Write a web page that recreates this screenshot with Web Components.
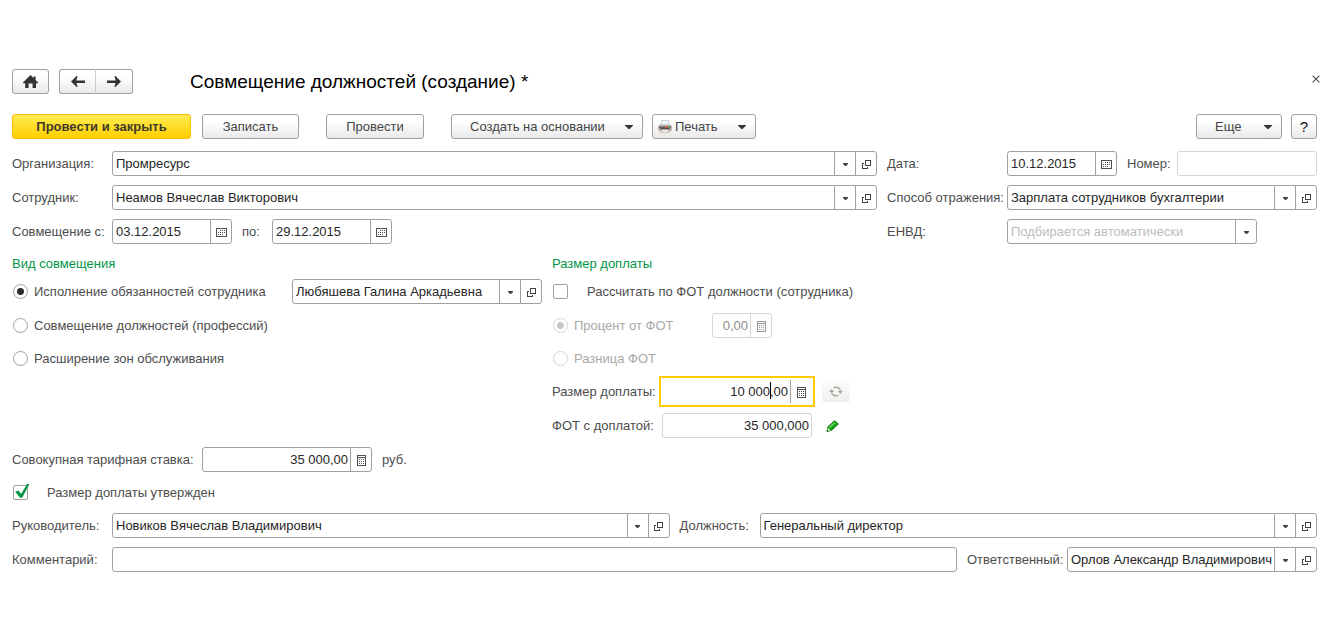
<!DOCTYPE html>
<html lang="ru">
<head>
<meta charset="utf-8">
<title>Совмещение должностей (создание)</title>
<style>
  body { margin: 0; background: #fff; font: 13px/15px "Liberation Sans", Arial, sans-serif; color: #4d4d4d; }
</style>
</head>
<body>
<doc-form></doc-form>

<script>
const svg = (w, h, body, crisp = true) =>
  `<svg width="${w}" height="${h}" viewBox="0 0 ${w} ${h}" ${crisp ? 'shape-rendering="crispEdges"' : ''} aria-hidden="true">${body}</svg>`;

const icons = {
  home: svg(15, 13, '<path fill="#333" d="M7.5 0 L10.5 3 V1.4 H12.6 V5 L15 7.6 V8.2 H13 V13 H9.6 V8.4 H5.6 V13 H2.2 V8.2 H0 V7.6 Z"/>', false),
  back: svg(14, 11, '<path fill="#333" d="M5.6 0 L0 5.5 L5.6 11 H6.6 L5.4 7 H14 V4.4 H5.4 L6.6 0 Z"/>', false),
  forward: svg(14, 11, '<path fill="#333" d="M8.4 0 L14 5.5 L8.4 11 H7.4 L8.6 7 H0 V4.4 H8.6 L7.4 0 Z"/>', false),
  close: svg(8, 8, '<path stroke="#555" stroke-width="1.2" fill="none" d="M.6 .6 L7.4 7.4 M7.4 .6 L.6 7.4"/>', false),
  caret: svg(8, 4, '<path fill="#333" d="M0 0 H8 V.6 L4.6 4 H3.4 L0 .6 Z"/>', false),
  drop: svg(5, 3, '<path fill="#444" d="M0 0 H5 V1 L3 3 H2 L0 1 Z"/>', false),
  open: svg(9, 9, '<path fill="none" stroke="#444" d="M3.5 .5 H8.5 V5.5 H3.5 Z M2 3.5 H.5 V8.5 H5.5 V7"/>'),
  calendar: svg(11, 9, '<path fill="none" stroke="currentColor" d="M.5 .5 H10.5 V8.5 H.5 Z"/><path stroke="currentColor" stroke-dasharray="1 1" d="M4 2.5 H9 M2 4.5 H9 M2 6.5 H7"/>'),
  calc: svg(9, 11, '<path fill="none" stroke="currentColor" d="M.5 .5 H8.5 V10.5 H.5 Z M1 2.5 H8"/><path stroke="currentColor" stroke-dasharray="1 1" d="M2 4.5 H7 M2 6.5 H7 M2 8.5 H7"/>'),
  printer: svg(14, 13, '<path fill="#f6f6f8" stroke="#c3c3cc" stroke-width=".8" d="M3.6 .5 H10.6 L11 5 H3 Z"/><path fill="#bdbaba" d="M1.5 4.5 H12.5 L14 6.5 V10 L12.5 11.5 H1.5 L0 10 V6.5 Z"/><path fill="#6c5f5a" d="M1 6.3 H13 V8.2 H1 Z"/><path fill="#3e3936" d="M2.5 8.2 H11.5 V9.8 H2.5 Z"/><path fill="#e8532f" d="M7 6.8 H9.5 V8 H7 Z"/><path fill="#5fae5a" d="M10.3 6.8 H12 V8 H10.3 Z"/><path fill="#f8efe8" stroke="#b5a79e" stroke-width=".7" d="M3.5 9.6 H10.5 L11.2 12.4 H2.8 Z"/>', false),
  refresh: svg(14, 11, '<g fill="none" stroke="#a3ae9b" stroke-width="1.4"><path d="M4.6 1.6 Q10.6 .2 11.4 5"/><path d="M9.4 9.4 Q3.4 10.8 2.6 6"/></g><path fill="#a3ae9b" d="M8.8 5 H14 L11.4 8 Z M0 6 H5.2 L2.6 3 Z"/>', false),
  pencil: svg(13, 12, '<path fill="#12a012" stroke="#0b6b12" stroke-width=".8" d="M8.6 .6 L12.4 4 L5.4 10.4 L1 11.4 L1.8 6.8 Z"/><path fill="#5ed35a" d="M8.2 2 L9.6 3.2 L4 8.2 L2.8 7 Z"/><path fill="#eafbe6" d="M1.7 7.8 L4.4 10.2 L1.5 11 Z"/><path fill="#0b5a12" d="M1 9.8 L2.6 11.2 L.6 11.8 Z"/>', false),
  tick: svg(16, 15, '<path fill="#009646" d="M1.2 7.8 L4.6 6.4 L7 10 L13.2 0 H15.4 L8.2 13.8 H6 Z"/>', false)
};

const base = `*, *::before, *::after { box-sizing: border-box; }
  svg { display: block; flex: none; }
  button, input, select { font: inherit; color: inherit; margin: 0; }`;

class Base extends HTMLElement {
  connectedCallback() {
    if (this.shadowRoot) return;
    this.attachShadow({ mode: 'open' }).innerHTML = this.render();
    this.ready();
  }
  attr(name, fallback = '') { return this.getAttribute(name) ?? fallback; }
  ready() {}
}

/* Push button; "menu" adds the drop-down arrow, "kind" picks the look. */
customElements.define('ui-button', class extends Base {
  render() {
    const icon = this.attr('icon');
    return `<style>${base}
      :host { display: inline-flex; flex: none; height: 25px; color: #444; }
      button { flex: 1; display: flex; align-items: center; justify-content: center; gap: 3px; padding: 0;
        border: 1px solid #a0a0a0; border-radius: 3px; background: linear-gradient(#fff 30%, #e9e9e9); }
      :host([kind=primary]) button { font-weight: bold; border-color: #fb0; color: #3f3a2a;
        background: linear-gradient(#ffec50, #ffcf00); }
      :host([kind=plain]) button { border: 0; background: none; }
      :host([kind=soft]) button { border: 0; border-radius: 2px; background: linear-gradient(#fbfbfb, #f0f0f0); }
      :host([join=start]) button { border-radius: 3px 0 0 3px; border-right-color: #ccc; }
      :host([join=end]) button { border-radius: 0 3px 3px 0; border-left-width: 0; }
      :host([menu]) button { justify-content: space-between; padding: 0 9px 0 18px; }
      :host([icon=printer]) button { padding-left: 5px; }
      .text { display: flex; align-items: center; gap: 3px; }
      :host([kind=help]) button { font-size: 15px; color: #111; }
    </style>
    <button type="button" aria-label="${this.attr('label')}"><span class="text">${icon ? icons[icon] : ''}<slot></slot></span>${this.hasAttribute('menu') ? icons.caret : ''}</button>`;
  }
  ready() {
    if (!this.hasAttribute('label')) this.shadowRoot.querySelector('button').removeAttribute('aria-label');
  }
});

/* Labelled field: text box or drop-down, with the side buttons named in "tools". */
customElements.define('ui-field', class extends Base {
  render() {
    const tools = this.attr('tools').split(' ').filter(Boolean);
    const names = { open: 'Открыть', calendar: 'Календарь', calc: 'Калькулятор' };
    const value = this.attr('value');
    const off = this.hasAttribute('disabled') ? 'disabled' : '';
    const control = tools.includes('drop')
      ? `<div class="pick"><select id="c"><option>${value}</option></select><span class="cell">${icons.drop}</span></div>`
      : `<input id="c" type="text" value="${value}" ${off}>`;
    return `<style>${base}
      :host { display: flex; align-items: center; min-width: 0; height: 25px; }
      label { flex: none; width: var(--label, auto); white-space: nowrap; }
      .box { position: relative; flex: 1; display: flex; min-width: 0; height: 25px; border: 1px solid #a0a0a0;
        border-radius: 3px; background: #fff; color: #262626; }
      :host([light]) .box, :host([disabled]) .box { border-color: #d6d6d6; }
      :host([disabled]) .box { color: #8c8c8c; }
      :host([hint]) select { color: #bdbdbd; }
      :host([active]) .box { border-color: transparent; outline: 2px solid #fc0; outline-offset: 1px; border-radius: 0; }
      input, select { flex: 1; width: 100%; min-width: 0; height: 23px; padding: 0 3px; border: 0; outline: 0;
        background: transparent; appearance: none; }
      :host([right]) input { text-align: right; padding-right: 2px; }
      .pick { flex: 1; min-width: 0; display: grid; grid-template-columns: minmax(0, 1fr) 21px; }
      select { grid-area: 1 / 1 / 2 / 3; padding: 0 21px 0 3px; text-overflow: clip; }
      .pick .cell { grid-area: 1 / 2; pointer-events: none; }
      .cell { flex: none; width: 21px; display: grid; place-items: center; padding: 2px 0 0; border: 0;
        border-left: 1px solid #a0a0a0; background: none; color: #505050; }
      :host([disabled]) .cell { border-color: #d6d6d6; color: #999; }
      .caret { position: absolute; right: 40px; top: 2px; width: 1px; height: 17px; background: #000; }
    </style>
    ${this.hasAttribute('label') ? `<label for="c">${this.attr('label')}</label>` : ''}
    <div class="box">${control}${this.hasAttribute('active') ? '<span class="caret"></span>' : ''}${tools.filter(t => t !== 'drop').map(t =>
      `<button class="cell" type="button" aria-label="${names[t]}" ${off}>${icons[t]}</button>`).join('')}</div>`;
  }
  ready() {
    if (!this.hasAttribute('label')) this.shadowRoot.querySelector('#c').setAttribute('aria-label', this.attr('name'));
  }
});

/* Radio or tick box with its caption. */
customElements.define('ui-choice', class extends Base {
  render() {
    const on = n => this.hasAttribute(n) ? n : '';
    return `<style>${base}
      :host { display: flex; align-items: center; min-width: 0; }
      :host([disabled]) { color: #a8a8a8; --line: #d3d3d3; --dot: #c6c6c6; }
      label { display: flex; align-items: center; gap: 6px; padding-left: 1px; white-space: nowrap; }
      :host([type=checkbox]) label { gap: 19px; }
      .mark { position: relative; display: grid; }
      input { appearance: none; width: 15px; height: 15px; border: 1px solid var(--line, #a0a0a0); border-radius: 50%; background: #fff; }
      input[type=checkbox] { border-radius: 2px; }
      input[type=radio]:checked { background: radial-gradient(circle, var(--dot, #2b2b2b) 3px, #fff 4px); }
      svg { position: absolute; left: 1px; top: -1px; display: none; pointer-events: none; }
      input[type=checkbox]:checked + svg { display: block; }
    </style>
    <label><span class="mark"><input type="${this.attr('type')}" ${on('checked')} ${on('disabled')}>${icons.tick}</span><slot></slot></label>`;
  }
  ready() {
    this.input = this.shadowRoot.querySelector('input');
    this.input.addEventListener('change', () => this.dispatchEvent(new CustomEvent('pick', { bubbles: true })));
  }
});

/* Titled group; keeps one radio chosen among its own. */
customElements.define('ui-group', class extends Base {
  render() {
    return `<style>${base}
      :host { display: block; min-width: 0; }
      section { display: flex; flex-direction: column; gap: 9px; }
      h2 { margin: 0; height: 17px; padding-top: 3px; font: inherit; color: #009646; }
    </style><section><h2>${this.attr('title-text')}</h2><slot></slot></section>`;
  }
  ready() {
    this.addEventListener('pick', e => {
      if (e.target.getAttribute('type') !== 'radio') return;
      this.querySelectorAll('ui-choice[type=radio]').forEach(c => { if (c !== e.target) c.input.checked = false; });
    });
  }
});

customElements.define('doc-head', class extends Base {
  render() {
    return `<style>${base}
      :host { display: flex; align-items: center; padding: 0 14px 0 12px; }
      nav { display: flex; gap: 10px; }
      nav div { display: flex; }
      nav ui-button { width: 37px; }
      h1 { flex: 1; margin: 0 0 0 57px; font-size: 19px; line-height: 25px; font-weight: normal; color: #000; }
      .close { width: 8px; height: 19px; align-self: flex-start; }
    </style>
    <nav><ui-button icon="home" label="Домой"></ui-button>
      <div><ui-button icon="back" join="start" label="Назад"></ui-button><ui-button icon="forward" join="end" label="Вперед"></ui-button></div></nav>
    <h1><slot></slot></h1>
    <ui-button class="close" kind="plain" icon="close" label="Закрыть"></ui-button>`;
  }
});

customElements.define('doc-toolbar', class extends Base {
  render() {
    return `<style>${base}
      :host { display: flex; justify-content: space-between; padding: 0 17px 0 12px; }
      div { display: flex; gap: 27px; }
      .near { gap: 9px; }
      .first { gap: 11px; }
      .main { width: 179px; } .s { width: 97px; } .m { width: 98px; } .xl { width: 192px; } .print { width: 104px; } .more { width: 86px; } .q { width: 26px; }
    </style>
    <div>
      <div class="first"><ui-button class="main" kind="primary">Провести и закрыть</ui-button><ui-button class="s">Записать</ui-button></div>
      <ui-button class="m">Провести</ui-button>
      <div class="near"><ui-button class="xl" menu>Создать на основании</ui-button><ui-button class="print" icon="printer" menu>Печать</ui-button></div>
    </div>
    <div class="near"><ui-button class="more" menu>Еще</ui-button><ui-button class="q" kind="help" label="Справка">?</ui-button></div>`;
  }
});

customElements.define('doc-form', class extends Base {
  render() {
    return `<style>${base}
      :host { display: block; padding: 69px 0 68px; }
      doc-toolbar { margin-top: 20px; }
      main { display: flex; flex-direction: column; gap: 9px; padding: 12px 17px 0 12px; }
      .row { display: flex; align-items: center; gap: 10px; height: 25px; }
      .text { height: 23px; }
      .grow { flex: 1; }
      .top { display: grid; grid-template-columns: minmax(0, 1fr) 430px; gap: 9px 10px; }
      .groups { display: grid; grid-template-columns: 530px minmax(0, 1fr); gap: 10px; }
      .l30 { --label: 30px; } .l50 { --label: 50px; } .l80 { --label: 80px; } .l100 { --label: 100px; }
      .l110 { --label: 110px; } .l120 { --label: 120px; } .l190 { --label: 190px; }
      .w60 { width: 60px; } .w150 { width: 150px; } .w220 { width: 220px; } .w230 { width: 230px; } .w250 { width: 250px; }
      .w260 { width: 260px; } .w350 { width: 350px; } .w360 { width: 360px; } .w370 { width: 370px; }
      .even { flex: 1 1 var(--label); }
      .kind { width: 270px; }
      .percent { width: 150px; }
      .tool { width: 28px; height: 21px; }
      .edit { width: 20px; }
    </style>
    <doc-head>Совмещение должностей (создание) *</doc-head>
    <doc-toolbar></doc-toolbar>
    <main>
      <div class="top">
        <ui-field class="l100" label="Организация:" value="Промресурс" tools="drop open"></ui-field>
        <div class="row">
          <ui-field class="l120 w230" label="Дата:" value="10.12.2015" tools="calendar"></ui-field>
          <ui-field class="l50 grow" label="Номер:" light></ui-field>
        </div>
        <ui-field class="l100" label="Сотрудник:" value="Неамов Вячеслав Викторович" tools="drop open"></ui-field>
        <ui-field class="l120" label="Способ отражения:" value="Зарплата сотрудников бухгалтерии" tools="drop open"></ui-field>
        <div class="row">
          <ui-field class="l100 w220" label="Совмещение с:" value="03.12.2015" tools="calendar"></ui-field>
          <ui-field class="l30 w150" label="по:" value="29.12.2015" tools="calendar"></ui-field>
        </div>
        <ui-field class="l120 w370" label="ЕНВД:" value="Подбирается автоматически" tools="drop" hint></ui-field>
      </div>

      <div class="groups">
        <ui-group title-text="Вид совмещения">
          <div class="row">
            <ui-choice class="kind" type="radio" checked>Исполнение обязанностей сотрудника</ui-choice>
            <ui-field class="w250" name="Сотрудник, чьи обязанности исполняются" value="Любяшева Галина Аркадьевна" tools="drop open"></ui-field>
          </div>
          <div class="row"><ui-choice type="radio">Совмещение должностей (профессий)</ui-choice></div>
          <div class="row text"><ui-choice type="radio">Расширение зон обслуживания</ui-choice></div>
        </ui-group>
        <ui-group title-text="Размер доплаты">
          <div class="row"><ui-choice type="checkbox">Рассчитать по ФОТ должности (сотрудника)</ui-choice></div>
          <div class="row">
            <ui-choice class="percent" type="radio" checked disabled>Процент от ФОТ</ui-choice>
            <ui-field class="w60" name="Процент" value="0,00" tools="calc" right disabled></ui-field>
          </div>
          <div class="row text"><ui-choice type="radio" disabled>Разница ФОТ</ui-choice></div>
          <div class="row">
            <ui-field class="l110 w260" label="Размер доплаты:" value="10 000,00" tools="calc" right active></ui-field>
            <ui-button class="tool" kind="soft" icon="refresh" label="Обновить"></ui-button>
          </div>
          <div class="row">
            <ui-field class="l110 w260" label="ФОТ с доплатой:" value="35 000,000" right light></ui-field>
            <ui-button class="edit" kind="plain" icon="pencil" label="Изменить"></ui-button>
          </div>
        </ui-group>
      </div>

      <div class="row"><ui-field class="l190 w360" label="Совокупная тарифная ставка:" value="35 000,00" tools="calc" right></ui-field><span>руб.</span></div>
      <div class="row text"><ui-choice type="checkbox" checked>Размер доплаты утвержден</ui-choice></div>
      <div class="row">
        <ui-field class="l100 even" label="Руководитель:" value="Новиков Вячеслав Владимирович" tools="drop open"></ui-field>
        <ui-field class="l80 even" label="Должность:" value="Генеральный директор" tools="drop open"></ui-field>
      </div>
      <div class="row">
        <ui-field class="l100 grow" label="Комментарий:"></ui-field>
        <ui-field class="l100 w350" label="Ответственный:" value="Орлов Александр Владимирович" tools="drop open"></ui-field>
      </div>
    </main>`;
  }
});
</script>
</body>
</html>
